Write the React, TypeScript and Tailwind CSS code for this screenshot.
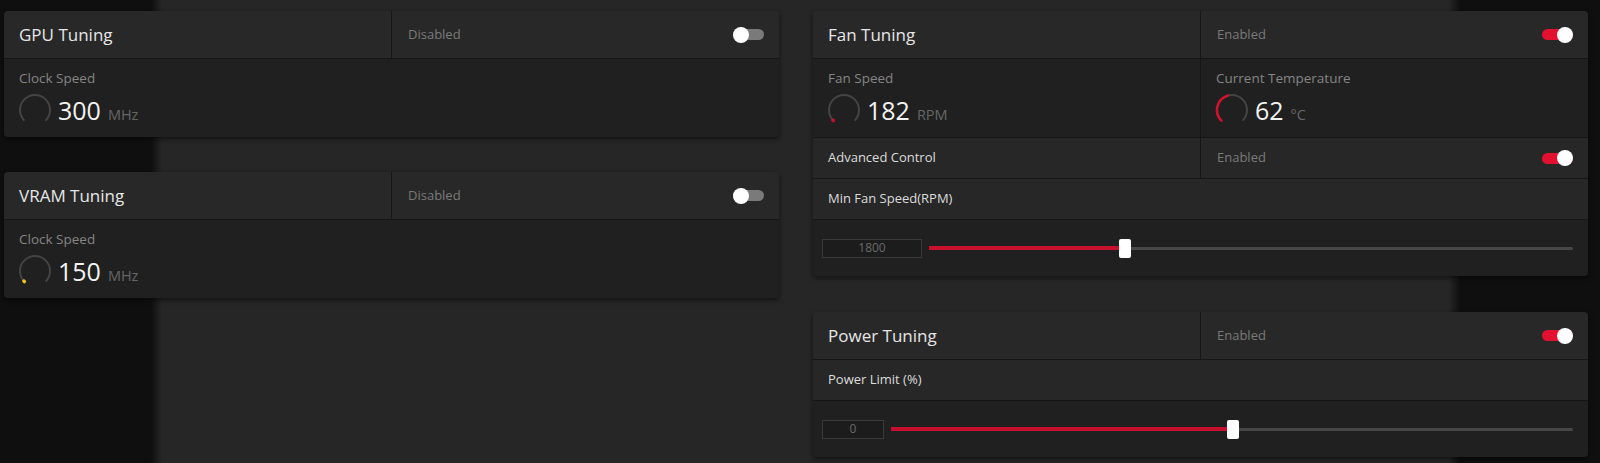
import React from 'react'

const font = { fontFamily: '"Open Sans", "Noto Sans", Arial, sans-serif' }

function arcPath(cx: number, cy: number, r: number, from: number, to: number) {
  const rad = (d: number) => (d * Math.PI) / 180
  const x1 = cx + r * Math.cos(rad(from))
  const y1 = cy + r * Math.sin(rad(from))
  const x2 = cx + r * Math.cos(rad(to))
  const y2 = cy + r * Math.sin(rad(to))
  const large = to - from > 180 ? 1 : 0
  return `M ${x1} ${y1} A ${r} ${r} 0 ${large} 1 ${x2} ${y2}`
}

function Gauge({ fraction, color }: { fraction: number; color?: string }) {
  const start = 135
  const end = start + 270 * Math.max(fraction, 0.01)
  return (
    <svg width="34" height="34" viewBox="0 0 34 34" className="shrink-0">
      <path d={arcPath(17, 17, 15, 135, 405)} fill="none" stroke="#444444" strokeWidth="2" />
      {color && (
        <path
          d={arcPath(17, 17, 15, start, end)}
          fill="none"
          stroke={color}
          strokeWidth={fraction > 0 ? 2.5 : 3.5}
          strokeLinecap="round"
        />
      )}
    </svg>
  )
}

function Toggle({ on }: { on: boolean }) {
  return (
    <div className="relative w-[31px] h-[16px] flex items-center">
      <div className={`w-full h-[11px] rounded-full ${on ? 'bg-[#e3102f]' : 'bg-[#7a7a7a]'}`} />
      <div className={`absolute top-0 w-[16px] h-[16px] rounded-full bg-white ${on ? 'right-0' : 'left-0'}`} />
    </div>
  )
}

function StatusCell({ label, on }: { label: string; on: boolean }) {
  return (
    <div className="flex-1 flex items-center justify-between pl-[16px] pr-[15px] border-l border-[#161616]">
      <span className="text-[13px] text-[#7a7a7a]">{label}</span>
      <Toggle on={on} />
    </div>
  )
}

function Header({ title, status, on }: { title: string; status: string; on: boolean }) {
  return (
    <div className="flex h-[48px] bg-[#282828]">
      <div className="w-[387px] shrink-0 flex items-center px-[15px] text-[17px] text-[#e6e6e6]">{title}</div>
      <StatusCell label={status} on={on} />
    </div>
  )
}

function Metric({
  label,
  value,
  unit,
  fraction,
  color,
  border,
}: {
  label: string
  value: string
  unit: string
  fraction: number
  color?: string
  border?: boolean
}) {
  return (
    <div className={`pl-[14px] pt-[10px] ${border ? 'flex-1 border-l border-[#161616]' : 'w-[387px] shrink-0'}`}>
      <div className="text-[13.5px] leading-[18px] text-[#858585] pl-[1px]">{label}</div>
      <div className="flex items-center gap-[6px] mt-[6px]">
        <Gauge fraction={fraction} color={color} />
        <div className="flex items-baseline gap-[7px]">
          <span className="text-[25px] leading-none text-[#f2f2f2]">{value}</span>
          <span className="text-[14.5px] leading-none text-[#666666]">{unit}</span>
        </div>
      </div>
    </div>
  )
}

function Slider({ value, boxWidth, pct }: { value: string; boxWidth: string; pct: number }) {
  return (
    <div className="flex items-center h-[56px] bg-[#202020] pl-[9px] pr-[15px] gap-[7px]">
      <div
        className={`${boxWidth} h-[19px] border border-[#3a3a3a] bg-[#1c1c1c] flex items-center justify-center text-[12px] text-[#6a6a6a]`}
      >
        {value}
      </div>
      <div className="relative flex-1 h-[19px] flex items-center">
        <div className="w-full h-[3px] rounded-full bg-[#474747]" />
        <div className="absolute left-0 h-[4px] bg-[#c8102e]" style={{ width: `${pct}%` }} />
        <div
          className="absolute top-0 w-[12px] h-[19px] rounded-[2px] bg-white"
          style={{ left: `${pct}%` }}
        />
      </div>
    </div>
  )
}

function Row({ children }: { children: React.ReactNode }) {
  return <div className="flex h-[41px] bg-[#272727]">{children}</div>
}

export default function App() {
  return (
    <div
      style={font}
      className="w-[1600px] h-[463px] overflow-hidden flex gap-[34px] pl-[4px] pr-[12px] pt-[11px] bg-[linear-gradient(to_right,#0f0f0f_151px,#262626_162px,#262626_1449px,#0f0f0f_1460px)]"
    >
      {/* left column */}
      <div className="w-[775px] flex flex-col gap-[35px]">
        <div className="rounded-[4px] overflow-hidden shadow-[0_2px_5px_rgba(0,0,0,0.55)] divide-y divide-[#161616]">
          <Header title="GPU Tuning" status="Disabled" on={false} />
          <div className="flex h-[78px] bg-[#202020]">
            <Metric label="Clock Speed" value="300" unit="MHz" fraction={0} />
          </div>
        </div>

        <div className="rounded-[4px] overflow-hidden shadow-[0_2px_5px_rgba(0,0,0,0.55)] divide-y divide-[#161616]">
          <Header title="VRAM Tuning" status="Disabled" on={false} />
          <div className="flex h-[78px] bg-[#202020]">
            <Metric label="Clock Speed" value="150" unit="MHz" fraction={0} color="#f0c419" />
          </div>
        </div>
      </div>

      {/* right column */}
      <div className="w-[775px] flex flex-col gap-[36px]">
        <div className="rounded-[4px] overflow-hidden shadow-[0_2px_5px_rgba(0,0,0,0.55)] divide-y divide-[#161616]">
          <Header title="Fan Tuning" status="Enabled" on />
          <div className="flex h-[79px] bg-[#202020]">
            <Metric label="Fan Speed" value="182" unit="RPM" fraction={0} color="#c8102e" />
            <Metric label="Current Temperature" value="62" unit="°C" fraction={0.44} color="#d4112d" border />
          </div>
          <Row>
            <div className="w-[387px] shrink-0 flex items-center px-[15px] text-[13px] text-[#dcdcdc]">
              Advanced Control
            </div>
            <StatusCell label="Enabled" on />
          </Row>
          <Row>
            <div className="flex items-center px-[15px] text-[13px] text-[#dcdcdc]">Min Fan Speed(RPM)</div>
          </Row>
          <Slider value="1800" boxWidth="w-[100px]" pct={29.5} />
        </div>

        <div className="rounded-[4px] overflow-hidden shadow-[0_2px_5px_rgba(0,0,0,0.55)] divide-y divide-[#161616]">
          <Header title="Power Tuning" status="Enabled" on />
          <Row>
            <div className="flex items-center px-[15px] text-[13px] text-[#dcdcdc]">Power Limit (%)</div>
          </Row>
          <Slider value="0" boxWidth="w-[62px]" pct={49.2} />
        </div>
      </div>
    </div>
  )
}
